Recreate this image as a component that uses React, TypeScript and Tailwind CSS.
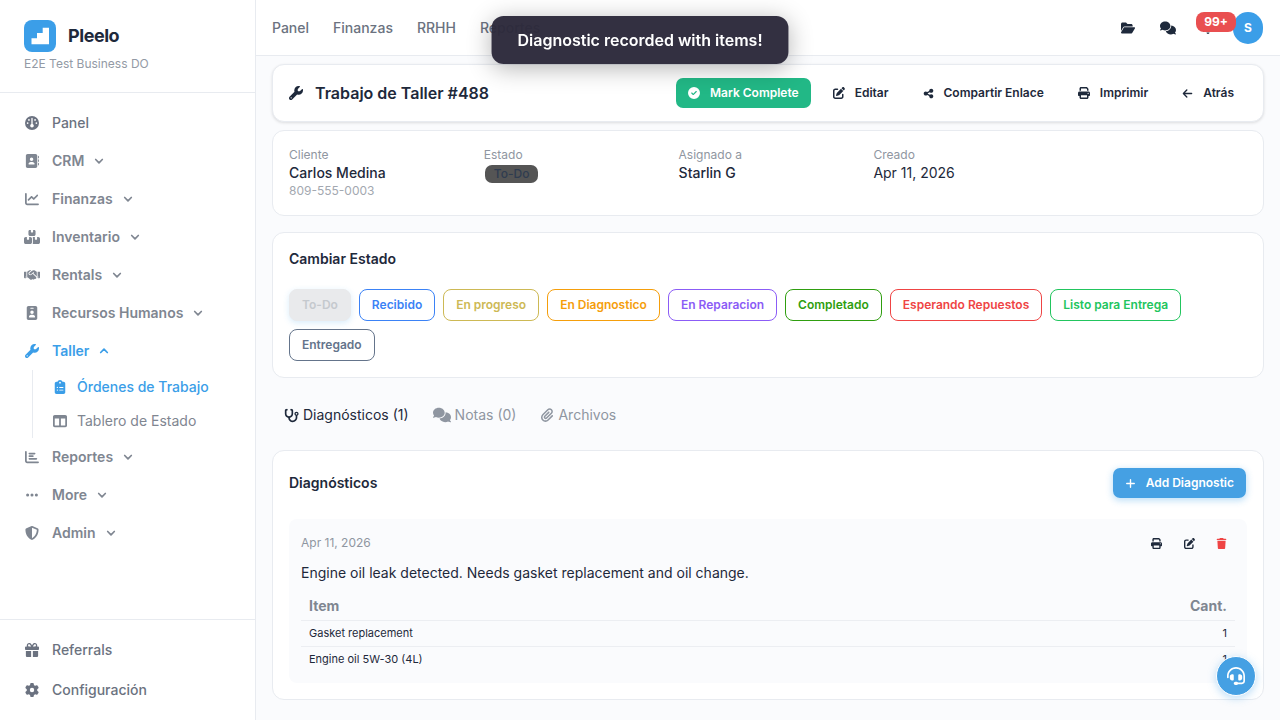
import React, { useState } from 'react';
import type { IconType } from 'react-icons';
import {
    FaAddressBook,
    FaArrowLeft,
    FaBell,
    FaBoxesStacked,
    FaChartBar,
    FaChartLine,
    FaCircleCheck,
    FaClipboardList,
    FaComments,
    FaEllipsis,
    FaFolderOpen,
    FaGauge,
    FaGear,
    FaGift,
    FaHandshake,
    FaHeadset,
    FaIdBadge,
    FaPaperclip,
    FaPenToSquare,
    FaPlus,
    FaPrint,
    FaShareNodes,
    FaShieldHalved,
    FaStethoscope,
    FaTableColumns,
    FaTrash,
    FaWrench,
} from 'react-icons/fa6';

interface NavGroup {
    label: string;
    icon: IconType;
    wide?: boolean;
    children?: { label: string; icon: IconType; active?: boolean }[];
}

const navGroups: NavGroup[] = [
    { label: 'CRM', icon: FaAddressBook },
    { label: 'Finanzas', icon: FaChartLine },
    { label: 'Inventario', icon: FaBoxesStacked, wide: true },
    { label: 'Rentals', icon: FaHandshake, wide: true },
    { label: 'Recursos Humanos', icon: FaIdBadge },
    {
        label: 'Taller',
        icon: FaWrench,
        children: [
            { label: 'Órdenes de Trabajo', icon: FaClipboardList, active: true },
            { label: 'Tablero de Estado', icon: FaTableColumns },
        ],
    },
    { label: 'Reportes', icon: FaChartBar },
    { label: 'More', icon: FaEllipsis },
    { label: 'Admin', icon: FaShieldHalved },
];

const statuses = [
    { label: 'Recibido', style: 'border-[#3b82f6] text-[#3b82f6]' },
    { label: 'En progreso', style: 'border-[#cdb955] text-[#cdb955]' },
    { label: 'En Diagnostico', style: 'border-[#f59e0b] text-[#f59e0b]' },
    { label: 'En Reparacion', style: 'border-[#8b5cf6] text-[#8b5cf6]' },
    { label: 'Completado', style: 'border-[#2f9e0f] text-[#2f9e0f]' },
    { label: 'Esperando Repuestos', style: 'border-[#ef4444] text-[#ef4444]' },
    { label: 'Listo para Entrega', style: 'border-[#22c55e] text-[#22c55e]' },
    { label: 'Entregado', style: 'border-[#64748b] text-[#64748b]' },
];

const tabs = [
    { id: 'diagnostics', label: 'Diagnósticos (1)', icon: FaStethoscope, size: 'h-[15px]' },
    { id: 'notes', label: 'Notas (0)', icon: FaComments, size: 'h-[18px]' },
    { id: 'files', label: 'Archivos', icon: FaPaperclip, size: 'h-3.5' },
];

const items = [
    { name: 'Gasket replacement', quantity: 1 },
    { name: 'Engine oil 5W-30 (4L)', quantity: 1 },
];

const cardClass = 'rounded-xl border border-[#e8ebf0] bg-white';
const buttonClass =
    'inline-flex h-8 items-center gap-2.5 rounded-lg border border-transparent bg-clip-padding px-3 text-xs font-semibold cursor-pointer';

function Logo() {
    return (
        <svg viewBox="0 0 32 32" className="h-8 w-8" aria-hidden="true">
            <rect width="32" height="32" rx="8" fill="#3b9ee8" />
            <path d="M7.5 24.2v-6H13V13h5.7V7.7H25v16.5z" fill="#fff" />
        </svg>
    );
}

function Chevron({ open }: { open: boolean }) {
    return (
        <svg
            viewBox="0 0 10 10"
            className={`ml-2.5 h-2.5 w-2.5 ${open ? 'rotate-180' : ''}`}
            fill="none"
            stroke="currentColor"
            strokeWidth="1.7"
            strokeLinecap="round"
            strokeLinejoin="round"
            aria-hidden="true"
        >
            <path d="M1.7 3.5 5 6.8l3.3-3.3" />
        </svg>
    );
}

function Sidebar() {
    const [openGroup, setOpenGroup] = useState('Taller');

    return (
        <aside className="sticky top-0 flex h-screen w-64 shrink-0 flex-col border-r border-[#e8ebf0] bg-white">
            <div className="border-b border-[#e8ebf0] px-6 py-5">
                <a href="#inicio" className="flex items-center gap-3">
                    <Logo />
                    <span className="text-lg leading-8 font-bold tracking-tight">Pleelo</span>
                </a>
                <p className="pt-1 text-xs text-[#939aa5]">E2E Test Business DO</p>
            </div>

            <nav className="flex-1 overflow-y-auto px-6 py-[11px] text-sm text-[#7f8691]">
                <a href="#panel" className="flex h-[38px] items-center gap-3 font-medium text-[#6b7280]">
                    <span className="flex w-4 justify-center"><FaGauge className="h-3.5 w-auto" /></span>
                    Panel
                </a>
                {navGroups.map(group => {
                    const open = openGroup === group.label;
                    const Icon = group.icon;
                    return (
                        <div key={group.label}>
                            <button
                                type="button"
                                aria-expanded={open}
                                onClick={() => setOpenGroup(open ? '' : group.label)}
                                className={`flex h-[38px] w-full cursor-pointer items-center font-semibold ${open ? 'text-[#3b9ee8]' : ''}`}
                            >
                                <span className="mr-3 flex w-4 shrink-0 justify-center">
                                    <Icon className={group.wide ? 'h-4 w-4' : 'h-3.5 w-auto'} />
                                </span>
                                {group.label}
                                <Chevron open={open} />
                            </button>
                            {open && group.children && (
                                <ul className="ml-2 border-l border-[#e8ebf0]">
                                    {group.children.map(child => (
                                        <li key={child.label}>
                                            <a
                                                href="#taller"
                                                className={`flex h-[34px] items-center gap-2.5 pl-5 ${child.active ? 'font-medium text-[#3b9ee8]' : ''}`}
                                            >
                                                <span className="flex w-3.5 justify-center"><child.icon className="h-3.5 w-auto" /></span>
                                                {child.label}
                                            </a>
                                        </li>
                                    ))}
                                </ul>
                            )}
                        </div>
                    );
                })}
            </nav>

            <div className="border-t border-[#e8ebf0] px-6 py-2.5 text-sm font-medium text-[#6b7280]">
                <a href="#referrals" className="flex h-10 items-center gap-3">
                    <span className="flex w-4 justify-center"><FaGift className="h-3.5 w-auto" /></span>
                    Referrals
                </a>
                <a href="#configuracion" className="flex h-10 items-center gap-3">
                    <span className="flex w-4 justify-center"><FaGear className="h-3.5 w-auto" /></span>
                    Configuración
                </a>
            </div>
        </aside>
    );
}

function Header() {
    return (
        <header className="flex h-14 items-center justify-between border-b border-[#e8ebf0] bg-white pr-[17px] pl-4">
            <nav className="flex gap-6 text-sm font-medium text-[#6b7280]">
                <a href="#panel">Panel</a>
                <a href="#finanzas">Finanzas</a>
                <a href="#rrhh">RRHH</a>
                <a href="#reportes">Reportes</a>
            </nav>
            <div className="flex items-center">
                <button type="button" aria-label="Archivos" className="flex h-8 w-10 items-center justify-center">
                    <FaFolderOpen className="h-3.5 w-auto" />
                </button>
                <button type="button" aria-label="Mensajes" className="flex h-8 w-10 items-center justify-center">
                    <FaComments className="h-4 w-auto" />
                </button>
                <button type="button" aria-label="Notificaciones" className="relative flex h-8 w-10 items-center justify-center">
                    <FaBell className="h-3 w-auto" />
                    <span className="absolute top-0 left-2 z-10 flex h-5 w-10 items-center justify-center rounded-lg bg-[#e94f50] text-xs font-bold text-white">
                        99+
                    </span>
                </button>
                <button type="button" aria-label="Perfil" className="ml-[5px] h-8 w-[30px] rounded-full bg-[#3b9ee8] text-xs font-bold text-white">
                    S
                </button>
            </div>
        </header>
    );
}

function StatusCard() {
    return (
        <section className={`${cardClass} mt-4 p-4`}>
            <h2 className="text-sm font-semibold">Cambiar Estado</h2>
            <div className="mt-5 flex flex-wrap gap-2">
                <button
                    type="button"
                    disabled
                    className="h-8 rounded-lg border border-[#e9eaec] bg-[#e9eaec] px-3 text-xs font-semibold text-[#c5c9ce] shadow-[0_2px_6px_rgba(59,158,232,0.2)]"
                >
                    To-Do
                </button>
                {statuses.map(status => (
                    <button
                        key={status.label}
                        type="button"
                        className={`h-8 cursor-pointer rounded-lg border px-3 text-xs font-semibold ${status.style}`}
                    >
                        {status.label}
                    </button>
                ))}
            </div>
        </section>
    );
}

function DiagnosticsCard() {
    return (
        <section className={`${cardClass} p-4`}>
            <div className="flex items-center justify-between">
                <h2 className="text-sm font-semibold">Diagnósticos</h2>
                <button type="button" className={`${buttonClass} bg-[#45a0e3] text-white shadow-[0_2px_6px_rgba(59,158,232,0.3)]`}>
                    <FaPlus className="h-[11px] w-auto" />
                    Add Diagnostic
                </button>
            </div>

            <article className="mt-5 rounded-lg bg-[#fafbfd] px-3 pt-3 pb-[11px]">
                <div className="flex h-6 items-center justify-between">
                    <time className="text-xs text-[#8f96a1]">Apr 11, 2026</time>
                    <div className="flex gap-1">
                        <button type="button" aria-label="Imprimir" className="cursor-pointer px-[9px] py-1">
                            <FaPrint className="h-[11px] w-auto" />
                        </button>
                        <button type="button" aria-label="Editar" className="cursor-pointer px-[9px] py-1">
                            <FaPenToSquare className="h-[11px] w-auto" />
                        </button>
                        <button type="button" aria-label="Eliminar" className="cursor-pointer px-2 py-1 text-[#ef4444]">
                            <FaTrash className="h-[11px] w-auto" />
                        </button>
                    </div>
                </div>
                <p className="mt-2 text-sm">Engine oil leak detected. Needs gasket replacement and oil change.</p>
                <table className="mt-2 w-full text-[11px] leading-4">
                    <thead>
                        <tr className="border-b border-[#eceef2] text-sm text-[#7f8691]">
                            <th className="px-2 pt-[5px] pb-1 text-left font-bold">Item</th>
                            <th className="px-2 pt-[5px] pb-1 text-right font-bold">Cant.</th>
                        </tr>
                    </thead>
                    <tbody>
                        {items.map(item => (
                            <tr key={item.name} className="border-b border-[#eceef2] last:border-0">
                                <td className="px-2 pt-1 pb-[5px]">{item.name}</td>
                                <td className="px-2 pt-1 pb-[5px] text-right">{item.quantity}</td>
                            </tr>
                        ))}
                    </tbody>
                </table>
            </article>
        </section>
    );
}

export default function App() {
    const [activeTab, setActiveTab] = useState('diagnostics');

    return (
        <div className="flex min-h-screen bg-[#fafbfd] font-['Inter',sans-serif] text-[#1e293b]">
            <Sidebar />

            <div className="min-w-0 flex-1">
                <Header />

                <main className="px-4 pt-2 pb-5">
                    <div className={`${cardClass} flex items-center justify-between px-4 py-3 shadow-[0_1px_3px_rgba(0,0,0,0.12)]`}>
                        <h1 className="flex items-center gap-3 font-semibold">
                            <FaWrench className="h-3.5 w-auto" />
                            Trabajo de Taller #488
                        </h1>
                        <div className="flex gap-2">
                            <button type="button" className={`${buttonClass} bg-[#22b886] text-white`}>
                                <FaCircleCheck className="h-3 w-auto" />
                                Mark Complete
                            </button>
                            <button type="button" className={buttonClass}>
                                <FaPenToSquare className="h-3 w-auto" />
                                Editar
                            </button>
                            <button type="button" className={buttonClass}>
                                <FaShareNodes className="h-[11px] w-auto" />
                                Compartir Enlace
                            </button>
                            <button type="button" className={buttonClass}>
                                <FaPrint className="h-3 w-auto" />
                                Imprimir
                            </button>
                            <button type="button" className={buttonClass}>
                                <FaArrowLeft className="h-[11px] w-auto" />
                                Atrás
                            </button>
                        </div>
                    </div>

                    <dl className={`${cardClass} mt-2 grid grid-cols-5 gap-4 p-4`}>
                        <div>
                            <dt className="text-xs text-[#8f96a1]">Cliente</dt>
                            <dd className="text-sm font-medium">Carlos Medina</dd>
                            <dd className="text-xs text-[#a3a8b0]">809-555-0003</dd>
                        </div>
                        <div>
                            <dt className="text-xs text-[#8f96a1]">Estado</dt>
                            <dd className="flex pt-px">
                                <span className="h-5 rounded-lg border border-transparent bg-[#555555] bg-clip-padding px-[9px] text-xs leading-[18px] font-medium text-[#2f3c50]">
                                    To-Do
                                </span>
                            </dd>
                        </div>
                        <div>
                            <dt className="text-xs text-[#8f96a1]">Asignado a</dt>
                            <dd className="text-sm font-medium">Starlin G</dd>
                        </div>
                        <div>
                            <dt className="text-xs text-[#8f96a1]">Creado</dt>
                            <dd className="text-sm">Apr 11, 2026</dd>
                        </div>
                    </dl>

                    <StatusCard />

                    <div role="tablist" className="mt-4 mb-3.5 flex text-sm">
                        {tabs.map(tab => (
                            <button
                                key={tab.id}
                                type="button"
                                role="tab"
                                aria-selected={activeTab === tab.id}
                                onClick={() => setActiveTab(tab.id)}
                                className={`flex h-[42px] cursor-pointer items-center gap-1 px-3 ${activeTab === tab.id ? '' : 'text-[#8f96a1]'}`}
                            >
                                <tab.icon className={`${tab.size} w-auto`} />
                                {tab.label}
                            </button>
                        ))}
                    </div>

                    <DiagnosticsCard />
                </main>
            </div>

            <div
                role="status"
                className="fixed top-4 left-1/2 z-50 -translate-x-1/2 rounded-xl bg-[#2c293b]/97 px-[26px] py-3 font-semibold whitespace-nowrap text-white shadow-[0_4px_24px_rgba(0,0,0,0.3)]"
            >
                Diagnostic recorded with items!
            </div>

            <button
                type="button"
                aria-label="Soporte"
                className="fixed right-6 bottom-6 flex h-10 w-10 cursor-pointer items-center justify-center rounded-full border border-white bg-[#45a0e3] text-white shadow-[0_2px_8px_rgba(59,158,232,0.35)]"
            >
                <FaHeadset className="h-[18px] w-auto" />
            </button>
        </div>
    );
}
